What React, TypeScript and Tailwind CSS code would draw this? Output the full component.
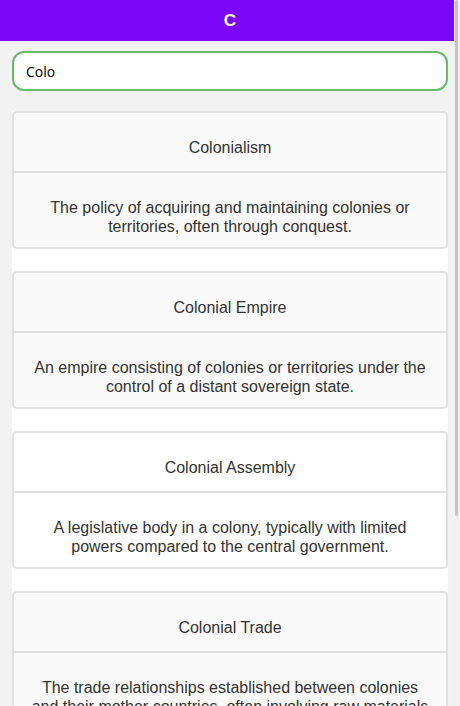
import React from "react";

type Term = { title: string; description: string; tone: "gray" | "white" };

const terms: Term[] = [
  {
    title: "Colonialism",
    description: "The policy of acquiring and maintaining colonies or territories, often through conquest.",
    tone: "gray",
  },
  {
    title: "Colonial Empire",
    description: "An empire consisting of colonies or territories under the control of a distant sovereign state.",
    tone: "gray",
  },
  {
    title: "Colonial Assembly",
    description: "A legislative body in a colony, typically with limited powers compared to the central government.",
    tone: "white",
  },
  {
    title: "Colonial Trade",
    description:
      "The trade relationships established between colonies and their mother countries, often involving raw materials and manufactured goods.",
    tone: "gray",
  },
];

function TermCard({ term }: { term: Term }) {
  return (
    <div
      className={
        term.tone === "white"
          ? "rounded-[5px] border-2 border-[#e0e0e0] bg-white text-center text-[#333]"
          : "rounded-[5px] border-2 border-[#e0e0e0] bg-[#f9f9f9] text-center text-[#333]"
      }
    >
      <div className="px-4 pt-[26px] pb-[14px] text-[16px] leading-[18px]">{term.title}</div>
      <div className="border-t-2 border-[#e0e0e0] px-4 pt-[25px] pb-[11px] text-[16px] leading-[19px]">
        {term.description}
      </div>
    </div>
  );
}

export default function App() {
  return (
    <div className="relative h-[706px] w-full overflow-hidden bg-[#f2f2f2] font-['Liberation_Sans',Arial,sans-serif]">
      {/* Header */}
      <div className="flex h-[41px] items-center justify-center bg-[#7a05f8]">
        <span className="font-['Liberation_Sans',Arial,sans-serif] text-[17px] font-bold text-white">C</span>
      </div>

      {/* Search */}
      <div className="px-3 pt-[10px]">
        <input
          type="text"
          defaultValue="Colo"
          className="block h-[40px] w-full rounded-xl border-2 border-[#66bb6a] bg-white pl-3 font-['Open_Sans',sans-serif] text-[14px] text-black outline-none"
        />
      </div>

      {/* Results */}
      <div className="mx-3 mt-[20px] flex flex-col gap-[22px] bg-white">
        {terms.map((term) => (
          <TermCard key={term.title} term={term} />
        ))}
      </div>

      {/* Scrollbar */}
      <div className="absolute top-0 right-0 h-full w-[6px] bg-[#f1f1f1]">
        <div className="ml-[1px] h-[516px] w-[3px] rounded-full bg-[#c4c4c4]" />
      </div>
    </div>
  );
}
